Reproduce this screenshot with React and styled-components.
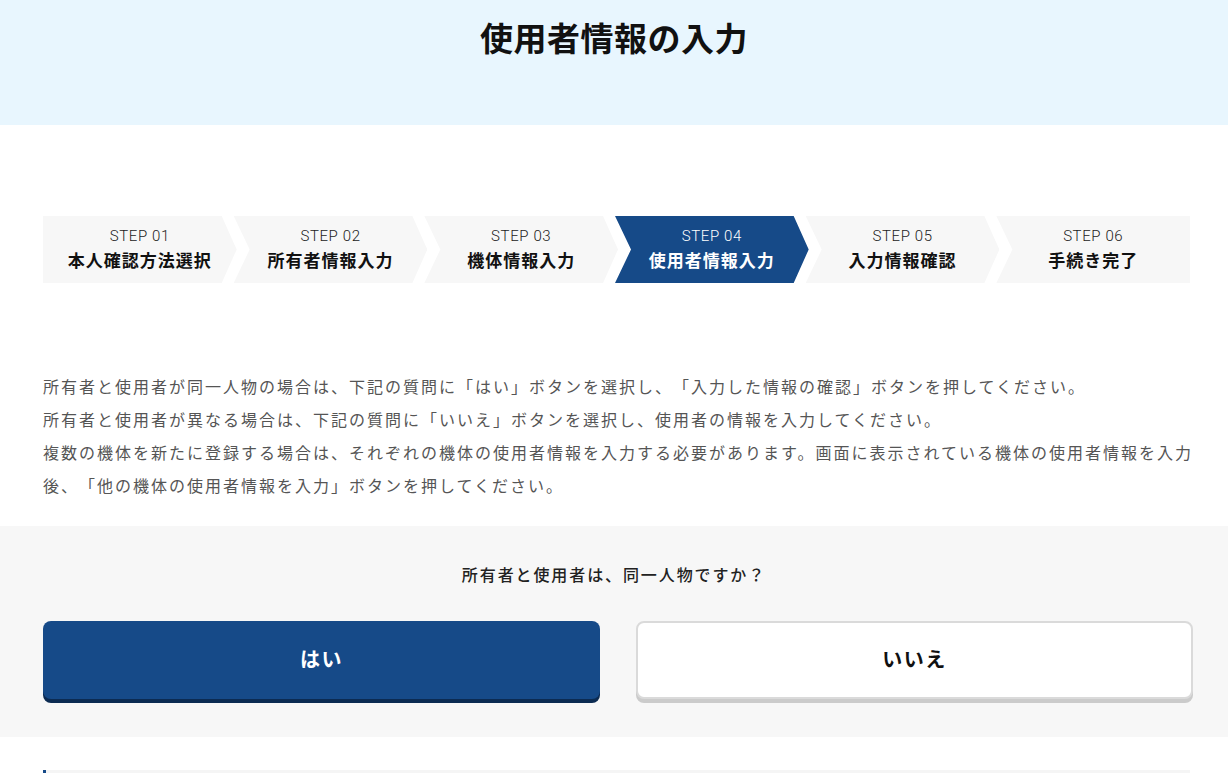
import React from 'react';
import styled, {createGlobalStyle} from "styled-components";

const GlobalStyle = createGlobalStyle`
    html, body {
        margin: 0;
        padding: 0;
        background: #fff;
        font-family: "Noto Sans CJK JP", "Noto Sans", sans-serif;
        color: #222;
        text-spacing-trim: space-all;
    }
`;

const NAVY = '#164a88';

const Header = styled.header`
    height: 125px;
    background-color: #e8f6fe;
    box-sizing: border-box;
    padding-top: 12px;
`;

const PageTitle = styled.h1`
    margin: 0;
    text-align: center;
    font-size: 33px;
    line-height: 50px;
    font-weight: 700;
    letter-spacing: 0.5px;
    color: #111;
`;

const Inner = styled.div`
    width: 1150px;
    margin-left: 43px;
`;

const StepList = styled.ol`
    display: flex;
    list-style: none;
    margin: 91px 0 0;
    padding: 0;
    width: 1147px;
`;

const Step = styled.li`
    flex: 1 1 0;
    height: 67px;
    margin-left: ${props => props.first ? 0 : -3}px;
    display: flex;
    flex-direction: column;
    align-items: center;
    justify-content: center;
    background-color: ${props => props.active ? NAVY : '#f7f7f7'};
    color: ${props => props.active ? '#fff' : '#111'};
    clip-path: ${props => {
        const left = props.first ? '0 50%' : '16px 50%';
        const endX = props.last ? '100%' : 'calc(100% - 15px)';
        return `polygon(0 0, ${endX} 0, 100% 50%, ${endX} 100%, 0 100%, ${left})`;
    }};
`;

const StepNumber = styled.span`
    font-family: Roboto, "Noto Sans CJK JP", sans-serif;
    font-size: 15px;
    line-height: 20px;
    font-weight: 300;
    letter-spacing: 0.6px;
    color: ${props => props.active ? '#fff' : '#222'};
`;

const StepLabel = styled.span`
    font-size: 17px;
    line-height: 28px;
    font-weight: 700;
    letter-spacing: 1px;
`;

const Lead = styled.p`
    margin: 87px 0 0;
    width: 1160px;
    font-size: 16px;
    line-height: 33px;
    letter-spacing: 2px;
    color: #555;
`;

const QuestionArea = styled.section`
    margin-top: 24px;
    background-color: #f7f7f7;
    height: 211px;
    box-sizing: border-box;
    padding-top: 35px;
`;

const Question = styled.p`
    margin: 0;
    text-align: center;
    font-size: 16px;
    line-height: 26px;
    font-weight: 500;
    letter-spacing: 1.9px;
    color: #222;
`;

const ButtonRow = styled.div`
    display: grid;
    grid-template-columns: 557px 557px;
    column-gap: 36px;
    margin-top: 34px;
`;

const AnswerButton = styled.button`
    height: 78px;
    padding: 0 0 4px;
    border-radius: 8px;
    font-family: inherit;
    font-size: 20px;
    font-weight: 700;
    letter-spacing: 1.5px;
    cursor: pointer;
    background-color: ${props => props.primary ? NAVY : '#fff'};
    color: ${props => props.primary ? '#fff' : '#111'};
    border: ${props => props.primary ? 'none' : '2px solid #dadada'};
    box-shadow: 0 4px 0 ${props => props.primary ? '#0c2b52' : '#cbcbcb'};
`;

const SectionHeading = styled.div`
    margin-top: 33px;
    width: 1147px;
    height: 40px;
    background-color: #f5f5f5;
    border-left: 3px solid ${NAVY};
    box-sizing: border-box;
`;

const steps = [
    {no: '01', label: '本人確認方法選択'},
    {no: '02', label: '所有者情報入力'},
    {no: '03', label: '機体情報入力'},
    {no: '04', label: '使用者情報入力'},
    {no: '05', label: '入力情報確認'},
    {no: '06', label: '手続き完了'},
];

const App = () => {
    const current = 3;

    return (
        <>
            <GlobalStyle />
            <Header>
                <PageTitle>使用者情報の入力</PageTitle>
            </Header>
            <Inner>
                <StepList>
                    {steps.map((step, i) => (
                        <Step
                            key={step.no}
                            first={i === 0}
                            last={i === steps.length - 1}
                            active={i === current}>
                            <StepNumber active={i === current}>STEP {step.no}</StepNumber>
                            <StepLabel>{step.label}</StepLabel>
                        </Step>
                    ))}
                </StepList>
                <Lead>
                    所有者と使用者が同一人物の場合は、下記の質問に「はい」ボタンを選択し、「入力した情報の確認」ボタンを押してください。<br />
                    所有者と使用者が異なる場合は、下記の質問に「いいえ」ボタンを選択し、使用者の情報を入力してください。<br />
                    複数の機体を新たに登録する場合は、それぞれの機体の使用者情報を入力する必要があります。画面に表示されている機体の使用者情報を入力後、「他の機体の使用者情報を入力」ボタンを押してください。
                </Lead>
            </Inner>
            <QuestionArea>
                <Question>所有者と使用者は、同一人物ですか？</Question>
                <Inner>
                    <ButtonRow>
                        <AnswerButton primary>はい</AnswerButton>
                        <AnswerButton>いいえ</AnswerButton>
                    </ButtonRow>
                </Inner>
            </QuestionArea>
            <Inner>
                <SectionHeading />
            </Inner>
        </>
    );
};

export default App;
